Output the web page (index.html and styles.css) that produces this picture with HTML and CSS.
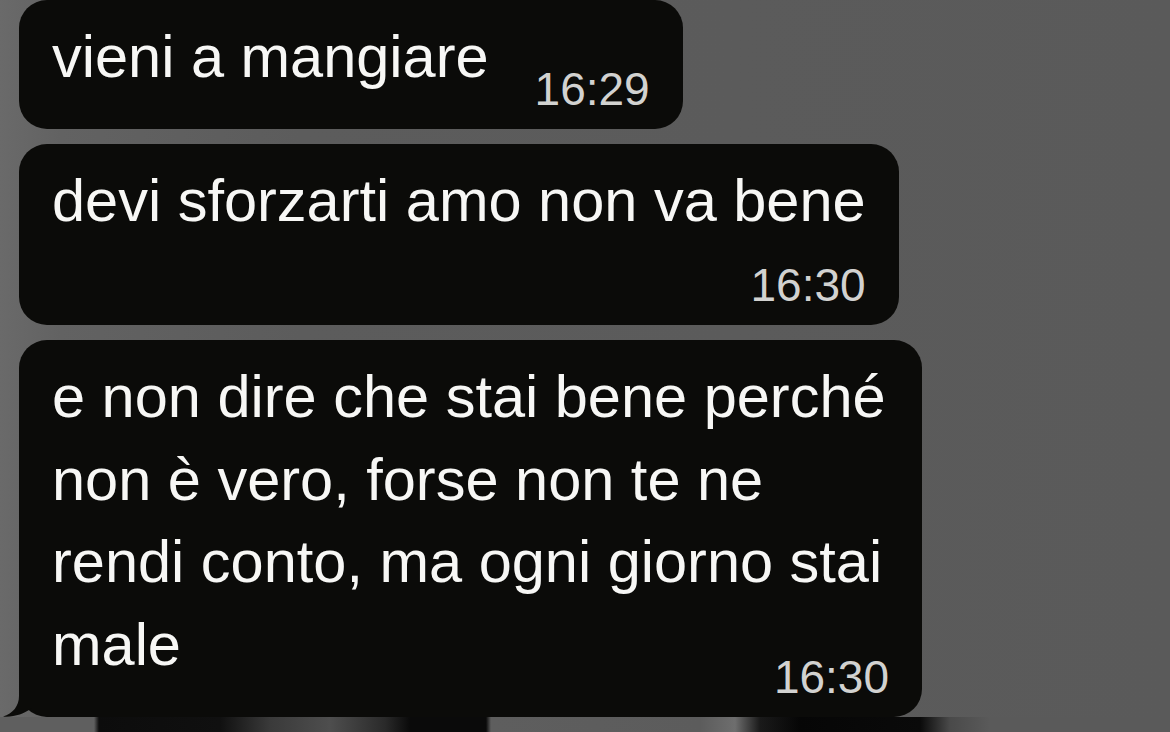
FILE: index.html
```html
<!DOCTYPE html>
<html lang="it">
<head>
<meta charset="utf-8">
<title>Chat</title>
<link rel="stylesheet" href="styles.css">
</head>
<body>
<main class="chat">
  <div class="bubble bubble--inline">
    <p class="text"><span class="msg">vieni a mangiare</span><span class="time">16:29</span></p>
  </div>
  <div class="bubble">
    <p class="text"><span class="msg">devi sforzarti amo non va bene</span><span class="time">16:30</span></p>
  </div>
  <div class="bubble bubble--inline bubble--tail">
    <p class="text"><span class="msg">e non dire che stai bene perché non è vero, forse non te ne rendi conto, ma ogni giorno stai male</span><span class="time">16:30</span></p>
    <svg class="tail" width="50" height="35" viewBox="0 0 50 35" aria-hidden="true">
      <path d="M16 0 L16 14 C16 24 10 31.5 0 34.5 C10 35.5 21 32 28 26.5 C33 31 40 35 50 35 L50 0 Z" fill="#0b0b09"/>
    </svg>
  </div>
</main>
<div class="ground"></div>
</body>
</html>
```

FILE: styles.css
```css
html, body {
  margin: 0;
  padding: 0;
}

body {
  width: 1170px;
  height: 732px;
  overflow: hidden;
  background: linear-gradient(to right, #6a6a6a 0px, #626262 60px, #5c5c5c 300px, #5a5a5a 1170px);
  font-family: "Liberation Sans", Arial, sans-serif;
}

.chat {
  display: flex;
  flex-direction: column;
  align-items: flex-start;
  gap: 15px;
  padding: 0 0 0 19px;
}

.bubble {
  position: relative;
  width: fit-content;
  max-width: 903px;
  box-sizing: border-box;
  padding: 16px 33px 15px 33px;
  background: #0b0b09;
  border-radius: 28px;
  color: #f7f7f5;
}

.text {
  margin: 0;
  font-size: 59.5px;
  line-height: 82.5px;
}

.time {
  display: block;
  margin-top: 17.5px;
  text-align: right;
  font-size: 46px;
  line-height: 50px;
  color: #d2d2d0;
}

.bubble--inline .text {
  display: flow-root;
}

.bubble--inline .time {
  float: right;
  margin: 48px 0 0 46px;
}

.tail {
  position: absolute;
  left: -16px;
  bottom: 0;
  display: block;
}

.ground {
  height: 16px;
  background: linear-gradient(to right,
    #5f5f5f 0px, #5f5f5f 94px,
    #0c0c0c 99px, #101010 220px,
    #3a3a3a 270px, #4e4e4e 330px,
    #2a2a2a 385px, #0a0a0a 410px, #0a0a0a 486px,
    #5e5e5e 491px, #5c5c5c 700px,
    #6e6e6e 735px, #1a1a1a 760px, #060606 800px, #0a0a0a 920px,
    #4a4a4a 950px, #5a5a5a 990px, #5a5a5a 1170px);
}
```
